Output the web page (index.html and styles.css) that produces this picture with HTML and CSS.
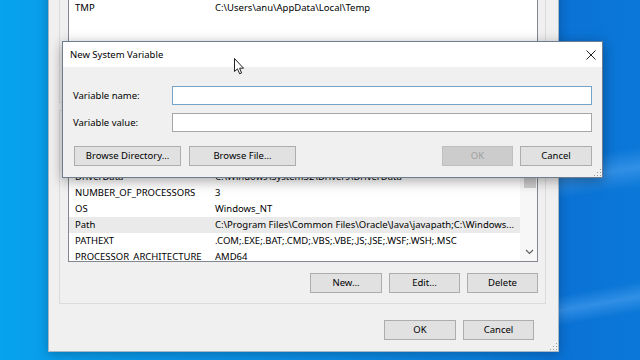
FILE: index.html
```html
<!DOCTYPE html>
<html>
<head>
<meta charset="utf-8">
<link rel="stylesheet" href="styles.css">
</head>
<body>
<div class="desktop">
  <div class="beam beam-1"></div>
  <div class="beam beam-2"></div>

  <section class="env-dialog">
    <div class="group user-group">
      <div class="list user-list">
        <div class="row"><span class="name">TMP</span><span class="val">C:\Users\anu\AppData\Local\Temp</span></div>
      </div>
      <div class="btn-row hidden-row">
        <button class="btn w71">New...</button>
        <button class="btn w71">Edit...</button>
        <button class="btn w71">Delete</button>
      </div>
    </div>
    <div class="group sys-group">
      <div class="list sys-list">
        <div class="rows">
          <div class="row"><span class="name">DriverData</span><span class="val">C:\Windows\System32\Drivers\DriverData</span></div>
          <div class="row"><span class="name">NUMBER_OF_PROCESSORS</span><span class="val">3</span></div>
          <div class="row"><span class="name">OS</span><span class="val">Windows_NT</span></div>
          <div class="row selected"><span class="name">Path</span><span class="val">C:\Program Files\Common Files\Oracle\Java\javapath;C:\Windows...</span></div>
          <div class="row"><span class="name">PATHEXT</span><span class="val">.COM;.EXE;.BAT;.CMD;.VBS;.VBE;.JS;.JSE;.WSF;.WSH;.MSC</span></div>
          <div class="row"><span class="name">PROCESSOR_ARCHITECTURE</span><span class="val">AMD64</span></div>
        </div>
        <div class="scrollbar">
          <div class="thumb"></div>
          <svg class="arrow-down" width="9" height="6" viewBox="0 0 9 6"><path d="M1 1 L4.5 4.5 L8 1" fill="none" stroke="#606060" stroke-width="1.2"/></svg>
        </div>
      </div>
      <div class="btn-row">
        <button class="btn w72">New...</button>
        <button class="btn w71">Edit...</button>
        <button class="btn w71">Delete</button>
      </div>
    </div>
    <div class="footer">
      <button class="btn w72">OK</button>
      <button class="btn w71">Cancel</button>
    </div>
    <div class="grip"></div>
  </section>

  <section class="nsv-dialog">
    <header class="titlebar">
      <span class="title">New System Variable</span>
      <svg class="close" width="10" height="10" viewBox="0 0 10 10"><path d="M0.5 0.5 L9.5 9.5 M9.5 0.5 L0.5 9.5" stroke="#222" stroke-width="1"/></svg>
    </header>
    <div class="nsv-body">
      <div class="field">
        <label class="label">Variable name:</label>
        <div class="input focused"></div>
      </div>
      <div class="field">
        <label class="label">Variable value:</label>
        <div class="input"></div>
      </div>
      <div class="nsv-buttons">
        <div class="left-btns">
          <button class="btn w107">Browse Directory...</button>
          <button class="btn w107">Browse File...</button>
        </div>
        <div class="right-btns">
          <button class="btn w71 disabled">OK</button>
          <button class="btn w72">Cancel</button>
        </div>
      </div>
    </div>
    <div class="grip"></div>
  </section>

  <svg class="cursor" width="12" height="18" viewBox="0 0 12 18">
    <path d="M0.5 0.5 L0.5 13.5 L3.5 10.8 L5.6 15.8 L7.6 15 L5.6 10.2 L9.5 10.2 Z" fill="#fff" stroke="#222" stroke-width="1" stroke-linejoin="round"/>
  </svg>
</div>
</body>
</html>
```

FILE: styles.css
```css
* { box-sizing: border-box; }
html, body { margin: 0; padding: 0; }
body {
  width: 640px; height: 360px; overflow: hidden;
  font-family: "Noto Sans", "Open Sans", sans-serif;
  font-size: 9.5px; color: #000;
}
.desktop {
  position: relative; width: 640px; height: 360px; overflow: hidden;
  background: linear-gradient(to right, #06a3ee 0%, #0a9be9 10%, #0b8fe4 40%, #0b7fdc 75%, #0a72d5 88%, #0b78d8 100%);
}
.beam {
  position: absolute; left: 540px; width: 160px; height: 40px;
  background: linear-gradient(to bottom, rgba(255,255,255,0), rgba(120,190,255,0.35), rgba(255,255,255,0));
  transform: rotate(-8deg);
}
.beam-1 { top: 150px; }
.beam-2 { top: 285px; height: 30px; transform: rotate(-10deg); }

button { font: inherit; color: inherit; margin: 0; }
.btn {
  height: 20px; padding: 0; background: #e1e1e1;
  border: 1px solid #adadad; color: #000; line-height: 18px; text-align: center;
}
.btn.disabled { background: #cccccc; border-color: #bfbfbf; color: #a0a0a0; }
.w71 { width: 71px; }
.w72 { width: 72px; }
.w107 { width: 107px; }

/* Environment Variables (background window) */
.env-dialog {
  position: absolute; left: 48px; top: -30px; width: 511px;
  background: #f0f0f0; border: 1px solid #a9b6c3;
  box-shadow: 0 2px 10px rgba(0,0,0,0.25);
  display: flex; flex-direction: column;
  padding: 0 12px 11px 10px;
}
.group {
  border: 1px solid #dcdcdc;
  padding: 11px 7px 10px 8px;
  display: flex; flex-direction: column;
}
.sys-group { margin-top: 7px; padding-top: 9px; }
.list {
  background: #fff; border: 1px solid #828790;
  position: relative; overflow: hidden;
}
.user-list { height: 78px; padding-top: 16px; }
.sys-list { height: 142px; display: flex; }
.rows { flex: 1; min-width: 0; padding-top: 48px; }
.row { height: 16px; line-height: 16px; display: flex; white-space: nowrap; }
.row.selected { background: #eaeaea; }
.name { width: 146px; padding-left: 6px; flex: none; overflow: hidden; }
.val { flex: 1; overflow: hidden; }
.hidden-row { visibility: hidden; }
.scrollbar {
  width: 17px; flex: none; background: #f7f7f7;
  display: flex; flex-direction: column; align-items: flex-end;
  padding-right: 1px;
}
.thumb { width: 12px; height: 48px; margin-top: 19px; background: #cdcdcd; }
.arrow-down { margin-top: auto; margin-bottom: 6px; margin-right: 2px; }
.btn-row { display: flex; justify-content: flex-end; gap: 7px; margin-top: 11px; }
.footer { display: flex; justify-content: flex-end; gap: 7px; margin-top: 16px; padding-right: 12px; }
.grip {
  position: absolute; right: 1px; bottom: 1px; width: 8px; height: 8px;
  background-image: radial-gradient(circle, #9a9a9a 0.7px, transparent 0.9px);
  background-size: 3px 3px;
  clip-path: polygon(100% 0, 100% 100%, 0 100%);
}

/* New System Variable dialog */
.nsv-dialog {
  position: absolute; left: 62px; top: 41px; width: 541px; height: 137px;
  background: #f0f0f0; border: 1px solid #6d7d8f;
  box-shadow: 0 3px 12px rgba(0,0,0,0.35);
  display: flex; flex-direction: column;
}
.titlebar {
  height: 25px; background: #fff; flex: none;
  display: flex; align-items: center; justify-content: space-between;
  padding: 0 6px 0 7px;
}
.close { margin-right: 0; }
.nsv-body { padding: 19px 10px 0 10px; display: flex; flex-direction: column; }
.field { display: flex; align-items: center; height: 19px; margin-bottom: 8px; }
.label { width: 99px; flex: none; }
.input { flex: 1; height: 19px; background: #fff; border: 1px solid #a6a6a6; }
.input.focused { border-color: #74a3c7; }
.nsv-buttons { display: flex; justify-content: space-between; margin-top: 6px; padding-left: 1px; }
.left-btns, .right-btns { display: flex; gap: 7px; }
.left-btns { gap: 8px; }

.cursor { position: absolute; left: 234px; top: 58px; }
```
